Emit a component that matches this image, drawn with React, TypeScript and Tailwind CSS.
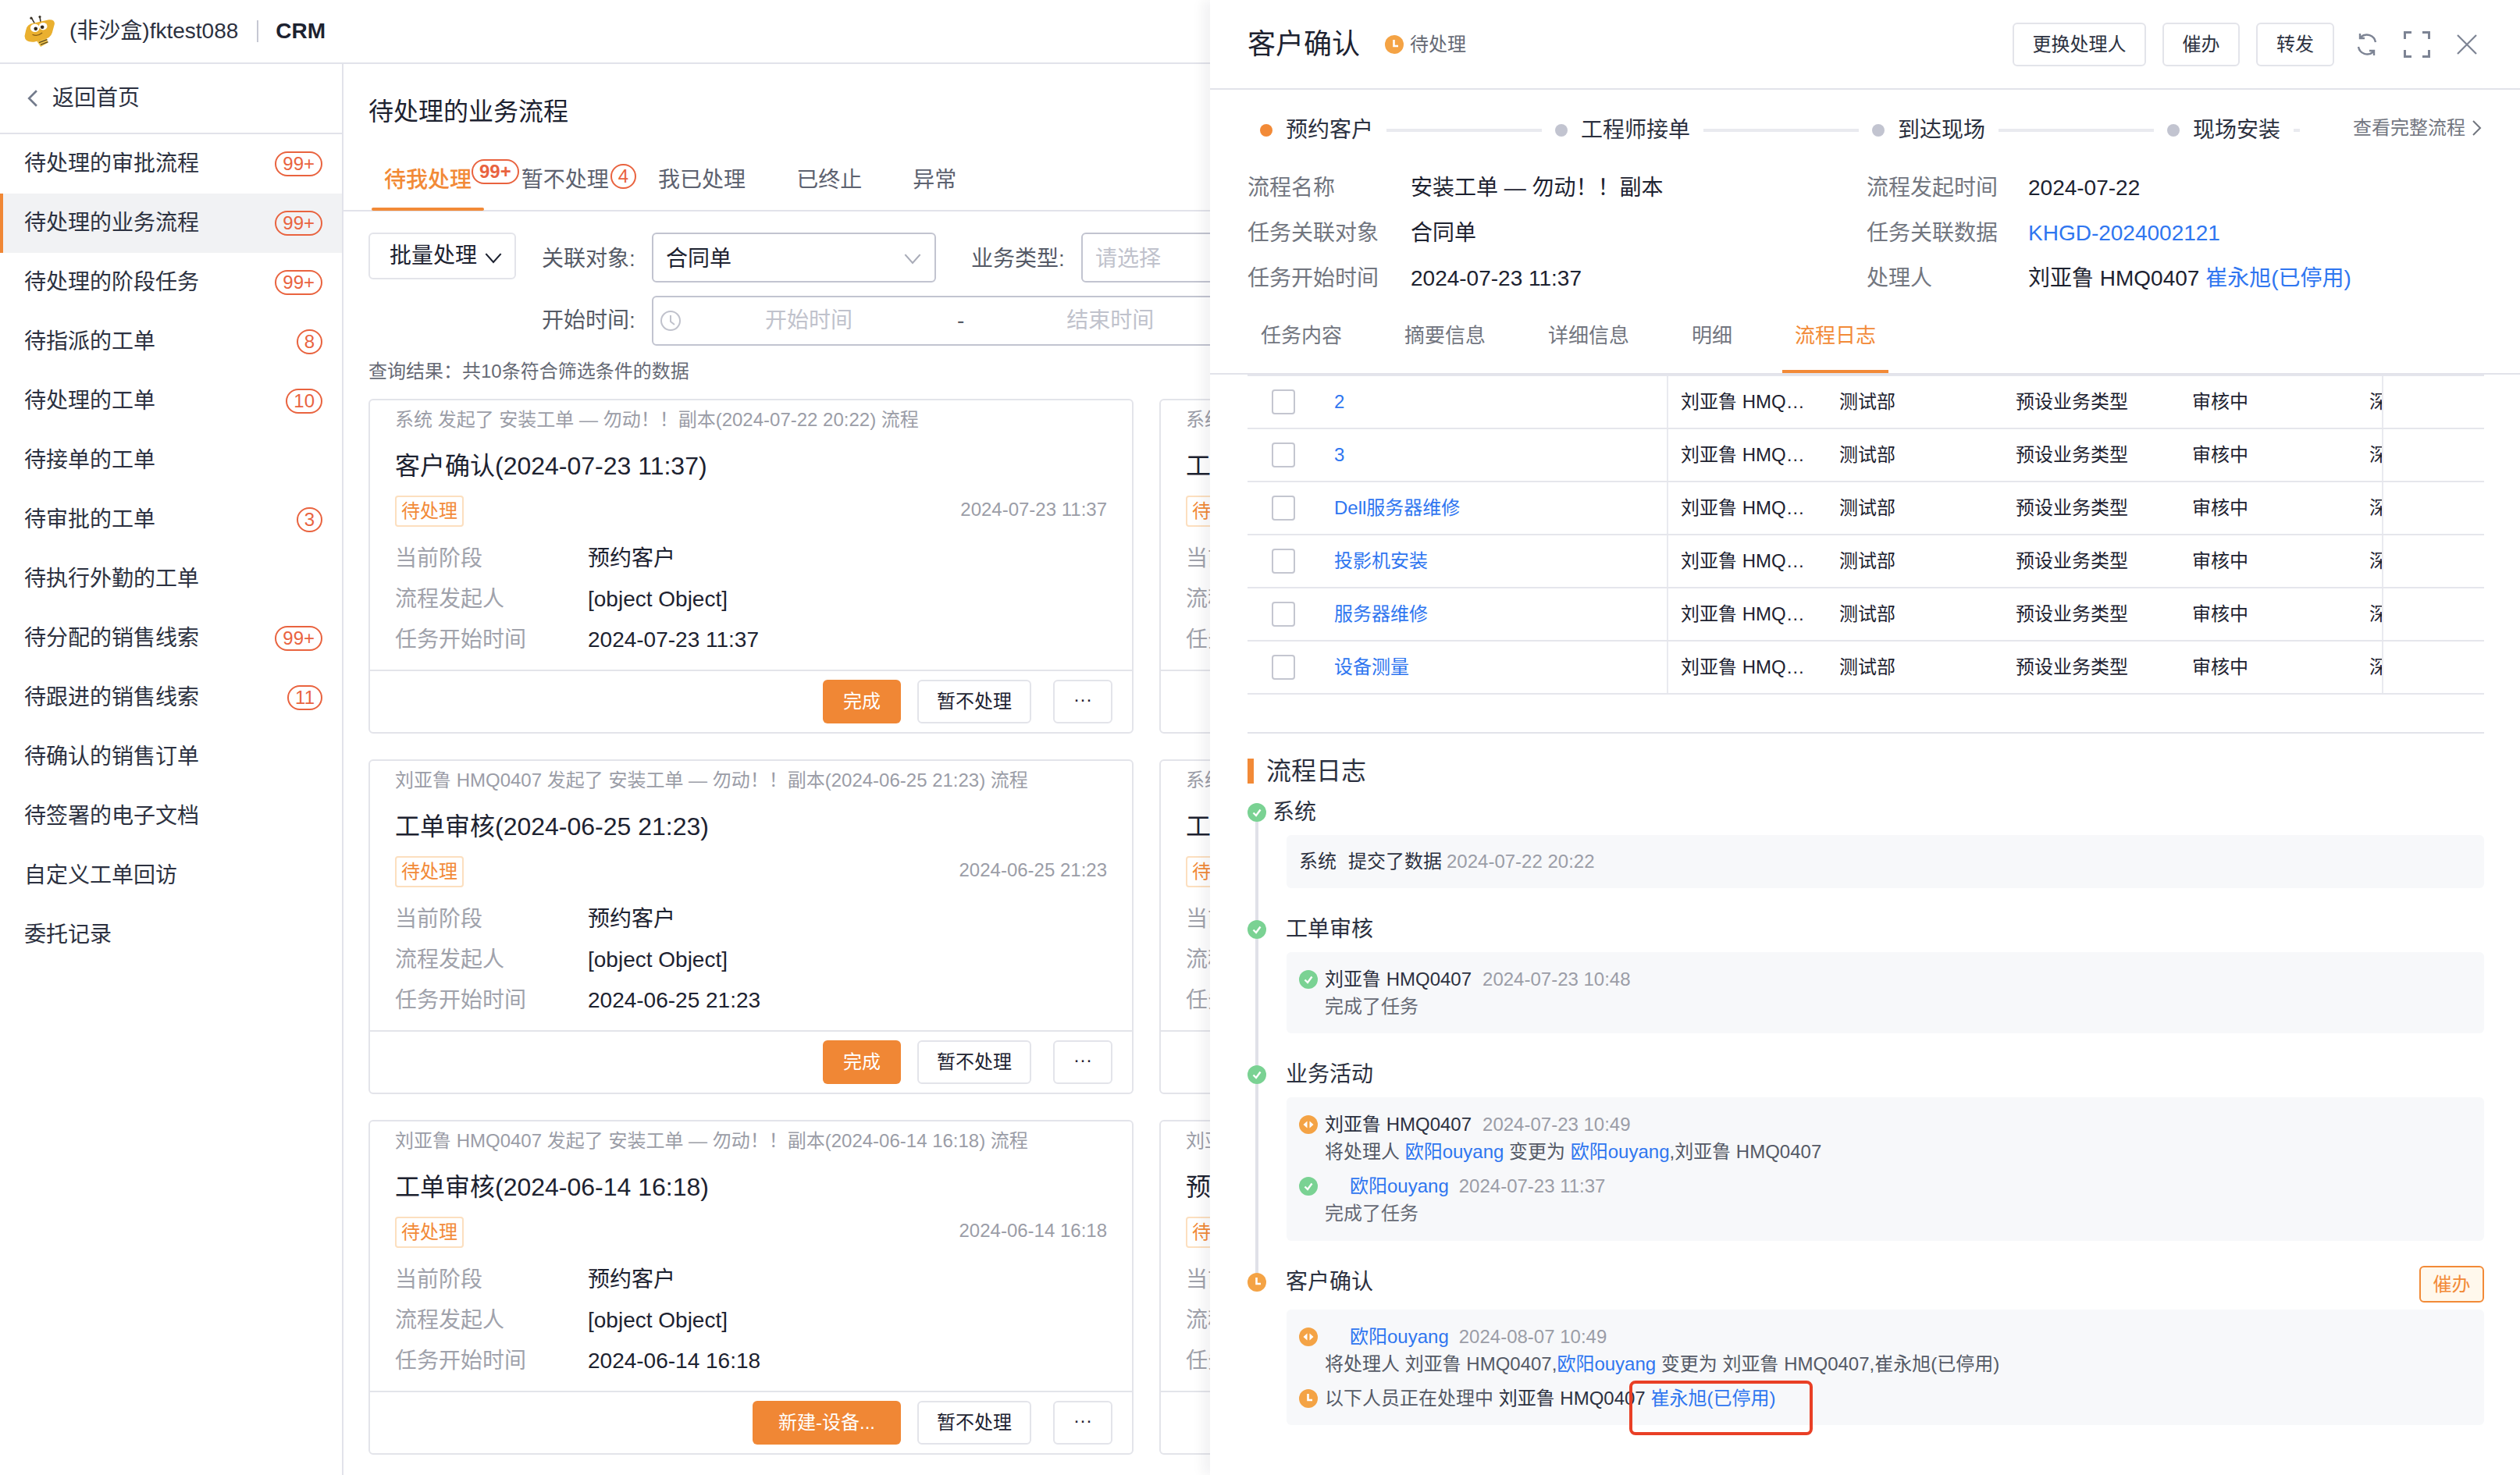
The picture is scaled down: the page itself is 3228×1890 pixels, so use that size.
import type { ReactNode } from 'react';

const sideItems: { label: string; count?: string; active?: boolean }[] = [
  { label: '待处理的审批流程', count: '99+' },
  { label: '待处理的业务流程', count: '99+', active: true },
  { label: '待处理的阶段任务', count: '99+' },
  { label: '待指派的工单', count: '8' },
  { label: '待处理的工单', count: '10' },
  { label: '待接单的工单' },
  { label: '待审批的工单', count: '3' },
  { label: '待执行外勤的工单' },
  { label: '待分配的销售线索', count: '99+' },
  { label: '待跟进的销售线索', count: '11' },
  { label: '待确认的销售订单' },
  { label: '待签署的电子文档' },
  { label: '自定义工单回访' },
  { label: '委托记录' },
];

const cards = [
  { from: '系统 发起了 安装工单 — 勿动！！副本(2024-07-22 20:22) 流程', title: '客户确认(2024-07-23 11:37)', date: '2024-07-23 11:37', action: '完成', wide: false },
  { from: '系统 发起了 安装工单 — 勿动！！副本(2024-07-22 20:22) 流程', title: '工单审核(2024-07-22 20:22)', date: '2024-07-22 20:22', action: '完成', wide: false },
  { from: '刘亚鲁 HMQ0407 发起了 安装工单 — 勿动！！副本(2024-06-25 21:23) 流程', title: '工单审核(2024-06-25 21:23)', date: '2024-06-25 21:23', action: '完成', wide: false },
  { from: '系统 发起了 安装工单 — 勿动！！副本(2024-06-25 21:23) 流程', title: '工单审核(2024-06-25 21:23)', date: '2024-06-25 21:23', action: '完成', wide: false },
  { from: '刘亚鲁 HMQ0407 发起了 安装工单 — 勿动！！副本(2024-06-14 16:18) 流程', title: '工单审核(2024-06-14 16:18)', date: '2024-06-14 16:18', action: '新建-设备...', wide: true },
  { from: '刘亚鲁 HMQ0407 发起了 安装工单 — 勿动！！副本(2024-06-14 16:18) 流程', title: '预约客户(2024-06-14 16:18)', date: '2024-06-14 16:18', action: '完成', wide: false },
];

const tableRows = ['2', '3', 'Dell服务器维修', '投影机安装', '服务器维修', '设备测量'];

function Logo() {
  return (
    <svg width="40" height="40" viewBox="0 0 38 38" className="shrink-0">
      <path d="M13 10 L9 3 M20 8 L19 1" stroke="#3a3328" strokeWidth="1.5" fill="none" />
      <circle cx="8.500" cy="3" r="1.500" fill="#3a3328" />
      <circle cx="19" cy="1.500" r="1.500" fill="#3a3328" />
      <path d="M14 29 L26 24 L29 33 L20 38 Z" fill="#f0c24a" />
      <path d="M17 30 L27 26 M18 33 L28 29 M20 35.500 L29 32" stroke="#5d4a1c" strokeWidth="1.300" />
      <path d="M2 18 Q3 10 12 9 L30 5 Q37 4.500 37 10 L34 21 Q32 28 23 29 L12 32 Q1 33 0.500 25 Z" fill="#eab02f" />
      <ellipse cx="13" cy="15" rx="5.500" ry="5" fill="#fff" />
      <ellipse cx="23" cy="13" rx="5" ry="4.500" fill="#fff" />
      <circle cx="14" cy="16" r="2.200" fill="#33291a" />
      <circle cx="22" cy="14" r="2.200" fill="#33291a" />
      <path d="M10 23 Q16 26 22 21" stroke="#8a5f16" strokeWidth="1.200" fill="none" />
    </svg>
  );
}

function Chevron({ dir, className, width = 2 }: { dir: 'left' | 'right' | 'down'; className: string; width?: number }) {
  const d = dir === 'left' ? 'M11 1 L2 10 L11 19' : dir === 'right' ? 'M1 1 L10 10 L1 19' : 'M1 2 L10 12 L19 2';
  const box = dir === 'down' ? '0 0 20 14' : '0 0 12 20';
  return (
    <svg viewBox={box} className={className} fill="none" stroke="currentColor" strokeWidth={width}>
      <path d={d} />
    </svg>
  );
}

function CheckDot() {
  return (
    <svg width="24" height="24" viewBox="0 0 24 24" className="shrink-0">
      <circle cx="12" cy="12" r="12" fill="#7ad293" />
      <path d="M7.500 12.500 L11 16 L16.500 8.500" stroke="#fff" strokeWidth="2.400" fill="none" />
    </svg>
  );
}

function ClockDot() {
  return (
    <svg width="24" height="24" viewBox="0 0 24 24" className="shrink-0">
      <circle cx="12" cy="12" r="12" fill="#f4a345" />
      <path d="M11.500 6 V14 H17" stroke="#fff" strokeWidth="2.600" fill="none" />
    </svg>
  );
}

function SwapDot() {
  return (
    <svg width="24" height="24" viewBox="0 0 24 24" className="shrink-0">
      <circle cx="12" cy="12" r="12" fill="#f4a345" />
      <path d="M10.500 7.500 L5.500 12 L10.500 16.500 Z M13.500 7.500 L18.500 12 L13.500 16.500 Z" fill="#fff" />
    </svg>
  );
}

function Badge({ children, bold }: { children: ReactNode; bold?: boolean }) {
  return (
    <span
      className={`inline-flex h-8 min-w-8 shrink-0 items-center justify-center rounded-full border-2 border-[#e9633f] px-2 text-[24px] leading-none text-[#e9633f] ${bold ? 'font-bold' : ''}`}
    >
      {children}
    </span>
  );
}

function Sidebar() {
  return (
    <aside className="flex w-[440px] shrink-0 flex-col border-r-2 border-[#e2e3ea]">
      <div className="flex h-[90px] shrink-0 items-center gap-[19px] border-b-2 border-[#e2e3ea] pl-[35px] text-[#2c3140]">
        <Chevron dir="left" width={2.4} className="h-[26px] w-[13px] text-[#737b8c]" />
        <span>返回首页</span>
      </div>
      {sideItems.map((item) => (
        <div
          key={item.label}
          className={`flex h-[76px] shrink-0 items-center justify-between pr-[25px] text-[#2c3140] ${item.active ? 'border-l-4 border-[#f08735] bg-[#f1f2f4] pl-[27px]' : 'pl-[31px]'}`}
        >
          <span>{item.label}</span>
          {item.count && <Badge>{item.count}</Badge>}
        </div>
      ))}
    </aside>
  );
}

function Card({ card }: { card: (typeof cards)[number] }) {
  return (
    <div className="flex h-[429px] flex-col rounded-md border-2 border-[#e3e4ea]">
      <div className="flex-1 px-8">
        <div className="flex h-[50px] items-center whitespace-nowrap text-[24px] text-[#9b9da7]">{card.from}</div>
        <div className="mb-[2px] flex h-[68px] items-center whitespace-nowrap text-[32px] text-[#1d2230]">{card.title}</div>
        <div className="mt-1 flex h-10 items-start justify-between">
          <span className="flex h-10 w-[88px] items-center justify-center rounded border-2 border-[#fcdfbf] text-[24px] text-[#f28a37]">
            待处理
          </span>
          <span className="mt-[2px] text-[24px] leading-[32px] text-[#9b9da7]">{card.date}</span>
        </div>
        <div className="mt-[15px] text-[28px]">
          {[
            ['当前阶段', '预约客户'],
            ['流程发起人', '[object Object]'],
            ['任务开始时间', card.date],
          ].map(([k, v]) => (
            <div key={k} className="flex h-[52px] items-center">
              <span className="w-[247px] shrink-0 text-[#a0a2ab]">{k}</span>
              <span className="text-[#1d2230]">{v}</span>
            </div>
          ))}
        </div>
      </div>
      <div className="flex h-[80px] shrink-0 items-start justify-end border-t-2 border-[#e3e4ea] pr-[25px] pt-[11px] text-[24px]">
        <button className={`h-14 rounded-md bg-[#f08735] text-white ${card.wide ? 'w-[190px]' : 'w-[100px]'}`}>
          {card.action}
        </button>
        <button className="ml-[21px] h-14 w-[146px] rounded-md border-2 border-[#e3e4ea] text-[#1d2230]">暂不处理</button>
        <button className="ml-7 h-14 w-[76px] rounded-md border-2 border-[#e3e4ea] pb-[6px] text-[#1d2230]">···</button>
      </div>
    </div>
  );
}

function MainList() {
  return (
    <main className="relative min-w-0 flex-1 overflow-hidden">
      <div className="flex h-[122px] items-center pl-8 text-[32px] text-[#1d2230]">待处理的业务流程</div>
      <div className="relative flex h-[67px] items-start border-b-2 border-[#e2e3ea] pl-[52px] text-[#5d6270]">
        <span className="mt-[7px] font-medium leading-10 text-[#f28a37]">待我处理</span>
        <Badge bold>99+</Badge>
        <span className="ml-[3px] mt-[7px] leading-10">暂不处理</span>
        <span className="ml-[2px]">
          <Badge>4</Badge>
        </span>
        <span className="ml-[28px] mt-[7px] leading-10">我已处理</span>
        <span className="ml-[65px] mt-[7px] leading-10">已终止</span>
        <span className="ml-[65px] mt-[7px] leading-10">异常</span>
        <div className="absolute left-9 top-[62px] h-1 w-36 rounded-sm bg-[#f28a37]" />
      </div>

      <div className="flex items-start pl-8 pt-[27px]">
        <div className="flex h-[60px] w-[189px] shrink-0 items-center rounded-md border-2 border-[#e3e4ea] pl-[25px] text-[#1d2230]">
          批量处理
          <Chevron dir="down" className="ml-[10px] mt-1 h-[15px] w-[22px] text-[#1d2230]" />
        </div>
        <div className="ml-[33px] flex h-16 w-[141px] shrink-0 items-center whitespace-nowrap pt-[3px] text-[#555a66]">关联对象:</div>
        <div className="flex h-16 w-[364px] shrink-0 items-center justify-between rounded-md border-2 border-[#c2c4d0] pl-4 pr-[17px] pt-[3px] text-[#1d2230]">
          合同单
          <Chevron dir="down" className="h-[15px] w-[22px] text-[#a9acb8]" />
        </div>
        <div className="ml-[45px] flex h-16 w-[141px] shrink-0 items-center whitespace-nowrap pt-[3px] text-[#555a66]">业务类型:</div>
        <div className="flex h-16 w-[300px] shrink-0 items-center rounded-md border-2 border-[#c2c4d0] pl-4 pt-[3px] text-[#c0c2cc]">请选择</div>
      </div>
      <div className="mt-[17px] flex items-start pl-[254px]">
        <div className="flex h-16 w-[141px] shrink-0 items-center whitespace-nowrap text-[#555a66]">开始时间:</div>
        <div className="relative flex h-16 w-[860px] shrink-0 items-center rounded-md border-2 border-[#c2c4d0] pl-2 text-[#c0c2cc]">
          <svg width="28" height="28" viewBox="0 0 28 28" fill="none" stroke="#c0c2cc" strokeWidth="2" className="shrink-0">
            <circle cx="14" cy="14" r="12" />
            <path d="M14 7 V15 L19 19" />
          </svg>
          <span className="ml-[107px]">开始时间</span>
          <span className="ml-[134px] text-[#555a66]">-</span>
          <span className="ml-[131px]">结束时间</span>
        </div>
      </div>
      <div className="mb-[2px] flex h-[66px] items-center pl-8 text-[24px] text-[#666a75]">查询结果：共10条符合筛选条件的数据</div>

      <div className="grid w-max grid-cols-[980px_980px] gap-x-[33px] gap-y-[33px] pl-8">
        {cards.map((card, i) => (
          <Card key={i} card={card} />
        ))}
      </div>
    </main>
  );
}

function Step({ label, done, line }: { label: string; done?: boolean; line: string }) {
  return (
    <>
      <span className={`h-4 w-4 shrink-0 rounded-full ${done ? 'bg-[#f28a37]' : 'bg-[#c2c4d0]'}`} />
      <span className="ml-[17px] shrink-0 whitespace-nowrap text-[#2c3140]">{label}</span>
      <span className={`mx-[17px] h-1 shrink-0 bg-[#e9eaef] ${line}`} />
    </>
  );
}

function Info({ label, children, wide }: { label: string; children: ReactNode; wide?: boolean }) {
  return (
    <div className="flex h-[58px] items-center">
      <span className={`shrink-0 text-[#72767f] ${wide ? 'w-[207px]' : 'w-[209px]'}`}>{label}</span>
      <span className="whitespace-nowrap text-[#1d2230]">{children}</span>
    </div>
  );
}

function LogBlock({ className, children }: { className: string; children: ReactNode }) {
  return <div className={`relative mt-[9px] ml-[50px] rounded-md bg-[#f7f8fa] pl-4 text-[24px] ${className}`}>{children}</div>;
}

function LogLine({ icon, children, className = '' }: { icon?: ReactNode; children: ReactNode; className?: string }) {
  return (
    <div className={`flex h-[35px] items-center whitespace-nowrap ${className}`}>
      <span className="w-[33px] shrink-0">{icon}</span>
      <span>{children}</span>
    </div>
  );
}

const linkCls = 'text-[#2f76f0]';
const grayCls = 'text-[#9b9da7]';

function Drawer() {
  return (
    <section className="absolute bottom-0 right-0 top-0 w-[1678px] overflow-hidden bg-white text-[28px] shadow-[-10px_0_14px_rgba(20,25,40,0.05)]">
      <div className="flex h-[115px] items-center border-b-2 border-[#e2e3ea] pl-12">
        <span className="text-[36px] text-[#1d2230]">客户确认</span>
        <span className="ml-[32px]">
          <ClockDot />
        </span>
        <span className="ml-2 text-[24px] text-[#666a75]">待处理</span>
        <div className="ml-auto flex items-center text-[24px] text-[#2c3140]">
          <button className="h-14 w-[171px] rounded-md border-2 border-[#e3e4ea]">更换处理人</button>
          <button className="ml-[21px] h-14 w-[99px] rounded-md border-2 border-[#e3e4ea]">催办</button>
          <button className="ml-[21px] h-14 w-[100px] rounded-md border-2 border-[#e3e4ea]">转发</button>
          <svg width="30" height="30" viewBox="0 0 30 30" fill="none" stroke="#7d8494" strokeWidth="2.400" className="ml-[27px]">
            <path d="M26 12 A11.500 11.500 0 0 0 7 5.500 M6 1 V7 H12" />
            <path d="M4 18 A11.500 11.500 0 0 0 23 24.500 M24 29 V23 H18" />
          </svg>
          <svg width="34" height="34" viewBox="0 0 34 34" fill="none" stroke="#7d8494" strokeWidth="3" className="ml-[32px]">
            <path d="M1.500 10 V1.500 H10 M24 1.500 H32.500 V10 M1.500 24 V32.500 H10 M24 32.500 H32.500 V24" />
          </svg>
          <svg width="26" height="26" viewBox="0 0 26 26" fill="none" stroke="#7d8494" strokeWidth="2.200" className="ml-[34px] mr-[55px]">
            <path d="M1 1 L25 25 M25 1 L1 25" />
          </svg>
        </div>
      </div>

      <div className="flex h-[97px] items-center pb-[2px] pl-[64px] pt-[9px]">
        <Step label="预约客户" done line="w-[199px]" />
        <Step label="工程师接单" line="w-[199px]" />
        <Step label="到达现场" line="w-[199px]" />
        <Step label="现场安装" line="w-[8px]" />
        <span className="ml-[51px] -translate-y-[3px] text-[24px] text-[#72767f]">查看完整流程</span>
        <Chevron dir="right" className="ml-[9px] h-[22px] w-[12px] -translate-y-[3px] text-[#72767f]" />
      </div>

      <div className="grid grid-cols-[793px_1fr] pl-12">
        <Info label="流程名称">安装工单 — 勿动！！副本</Info>
        <Info label="流程发起时间" wide>2024-07-22</Info>
        <Info label="任务关联对象">合同单</Info>
        <Info label="任务关联数据" wide>
          <span className={linkCls}>KHGD-2024002121</span>
        </Info>
        <Info label="任务开始时间">2024-07-23 11:37</Info>
        <Info label="处理人" wide>
          刘亚鲁 HMQ0407 <span className={linkCls}>崔永旭(已停用)</span>
        </Info>
      </div>

      <div className="flex h-[94px] items-start gap-12 border-b-2 border-[#e2e3ea] pl-[49px] text-[26px] text-[#72767f]">
        {['任务内容', '摘要信息', '详细信息', '明细'].map((t) => (
          <span key={t} className="flex h-[88px] items-center px-4">{t}</span>
        ))}
        <span className="flex h-[92px] items-center border-b-4 border-[#f28a37] px-4 text-[#f28a37]">流程日志</span>
      </div>

      <div className="ml-12 mr-[46px] text-[24px]">
        {tableRows.map((name, i) => (
          <div key={name} className={`flex items-stretch border-b-2 border-[#e5e6ec] ${i === 0 ? 'h-[70px] border-t-2' : 'h-[68px]'}`}>
            <div className="flex w-[539px] shrink-0 items-center border-r-2 border-[#e9eaef] pl-[31px]">
              <span className="h-8 w-[30px] shrink-0 rounded border-2 border-[#c4c6d0]" />
              <span className="ml-[50px] text-[#2f76f0]">{name}</span>
            </div>
            <div className="flex w-[916px] shrink-0 items-center overflow-hidden whitespace-nowrap border-r-2 border-[#e9eaef] pl-4 text-[#1d2230]">
              <span className="w-[203px] shrink-0">刘亚鲁 HMQ…</span>
              <span className="w-[226px] shrink-0">测试部</span>
              <span className="w-[226px] shrink-0">预设业务类型</span>
              <span className="w-[227px] shrink-0">审核中</span>
              <span className="shrink-0">深圳</span>
            </div>
          </div>
        ))}
      </div>

      <div className="ml-12 mr-[46px] mt-12 h-[2px] bg-[#e2e3ea]" />

      <div className="ml-12 mr-[46px] mt-8 flex h-8 items-center text-[32px] text-[#2c3140]">
        <span className="mr-4 h-8 w-2 bg-[#f28a37]" />
        流程日志
      </div>

      <div className="relative ml-12 mr-[46px] pt-[17px] text-[#2c3140]">
        <div className="absolute left-[10px] top-[49px] h-[578px] w-1 bg-[#e0e1e8]" />

        <div className="relative flex h-10 items-center">
          <CheckDot />
          <span className="ml-2">系统</span>
        </div>
        <LogBlock className="flex h-[68px] items-center">
          <span>系统</span>
          <span className="ml-[15px]">提交了数据</span>
          <span className={`ml-[6px] ${grayCls}`}>2024-07-22 20:22</span>
        </LogBlock>

        <div className="relative mt-[33px] flex h-10 items-center">
          <CheckDot />
          <span className="ml-[25px]">工单审核</span>
        </div>
        <LogBlock className="h-[104px] pt-[17px]">
          <LogLine icon={<CheckDot />}>
            刘亚鲁 HMQ0407<span className={`ml-[14px] ${grayCls}`}>2024-07-23 10:48</span>
          </LogLine>
          <LogLine><span className="text-[#666a75]">完成了任务</span></LogLine>
        </LogBlock>

        <div className="relative mt-[33px] flex h-10 items-center">
          <CheckDot />
          <span className="ml-[25px]">业务活动</span>
        </div>
        <LogBlock className="h-[184px] pt-[17px]">
          <LogLine icon={<SwapDot />}>
            刘亚鲁 HMQ0407<span className={`ml-[14px] ${grayCls}`}>2024-07-23 10:49</span>
          </LogLine>
          <LogLine>
            <span className="text-[#555a66]">
              将处理人 <span className={linkCls}>欧阳ouyang</span> 变更为 <span className={linkCls}>欧阳ouyang</span>,刘亚鲁 HMQ0407
            </span>
          </LogLine>
          <LogLine icon={<CheckDot />} className="mt-[9px]">
            <span className={`ml-[32px] ${linkCls}`}>欧阳ouyang</span>
            <span className={`ml-[13px] ${grayCls}`}>2024-07-23 11:37</span>
          </LogLine>
          <LogLine><span className="text-[#666a75]">完成了任务</span></LogLine>
        </LogBlock>

        <div className="relative mt-8 flex h-[47px] items-start justify-between">
          <div className="flex h-[42px] items-center">
            <ClockDot />
            <span className="ml-[25px]">客户确认</span>
          </div>
          <button className="h-[47px] w-[83px] rounded-md border-2 border-[#f28a37] bg-[#fff8ec] text-[24px] text-[#f28a37]">催办</button>
        </div>
        <LogBlock className="h-[148px] pt-[17px]">
          <LogLine icon={<SwapDot />}>
            <span className={`ml-[32px] ${linkCls}`}>欧阳ouyang</span>
            <span className={`ml-[13px] ${grayCls}`}>2024-08-07 10:49</span>
          </LogLine>
          <LogLine>
            <span className="text-[#555a66]">
              将处理人 刘亚鲁 HMQ0407,<span className={linkCls}>欧阳ouyang</span> 变更为 刘亚鲁 HMQ0407,崔永旭(已停用)
            </span>
          </LogLine>
          <LogLine icon={<ClockDot />} className="mt-[9px]">
            <span className="text-[#555a66]">以下人员正在处理中</span> 刘亚鲁 HMQ0407 <span className={linkCls}>崔永旭(已停用)</span>
          </LogLine>
          <div className="absolute left-[439px] top-[91px] h-[70px] w-[235px] rounded-lg border-4 border-[#e93f25]" />
        </LogBlock>
      </div>
    </section>
  );
}

export default function App() {
  return (
    <div className="relative flex h-[1890px] w-[3228px] flex-col overflow-hidden bg-white font-['Liberation_Sans','Noto_Sans_CJK_SC',sans-serif] text-[28px]">
      <header className="flex h-[82px] shrink-0 items-center border-b-2 border-[#e2e3ea] pl-[31px] text-[#2c3140]">
        <Logo />
        <span className="ml-[18px]">(非沙盒)fktest088</span>
        <span className="ml-[24px] h-7 w-[2px] bg-[#c6c8d3]" />
        <span className="ml-[22px] font-bold text-[#1d2230]">CRM</span>
      </header>
      <div className="flex min-h-0 flex-1">
        <Sidebar />
        <MainList />
      </div>
      <Drawer />
    </div>
  );
}
